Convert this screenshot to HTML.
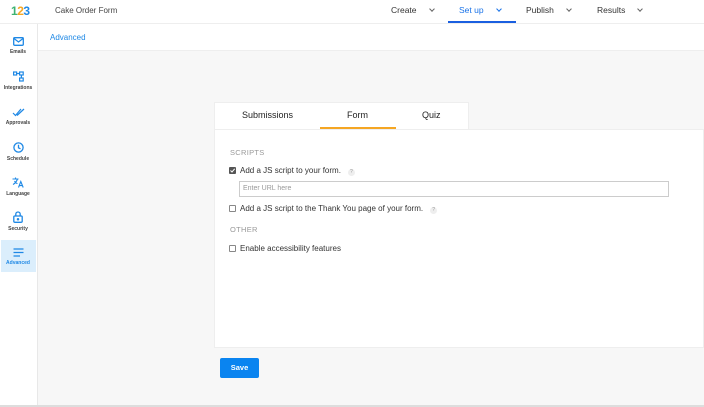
<!DOCTYPE html>
<html><head><style>
*{box-sizing:border-box;margin:0;padding:0}
body{width:704px;height:407px;overflow:hidden;background:#f7f7f7;font-family:"Liberation Sans",sans-serif;position:relative;color:#333}
.a{position:absolute}
.top{left:0;top:0;width:704px;height:24px;background:#fff;border-bottom:1px solid #eee}
.nav{top:5px;font-size:8.5px;color:#333}
.chev{display:inline-block;width:4px;height:4px;border-right:1px solid #666;border-bottom:1px solid #666;transform:rotate(45deg);margin-left:13px;position:relative;top:-2px}
.side{left:0;top:24px;width:38px;height:383px;background:#fff;border-right:1px solid #e8e8e8}
.si{position:absolute;left:0;width:36px;text-align:center;font-size:5px;font-weight:bold;color:#444}
.si svg{display:block;margin:0 auto 3px}
.lbl{font-size:8px;color:#333}
.cb{display:inline-block;width:7px;height:7px;border:1px solid #888;border-radius:1px;vertical-align:-1px;margin-right:4px;background:#fff}
.q{display:inline-block;width:7px;height:7px;border-radius:50%;background:#eee;font-size:5px;color:#999;text-align:center;line-height:7px;margin-left:7px}
</style></head><body>
<div class="a top"></div>
<div class="a" style="left:11px;top:4px;font-size:12px;font-weight:bold;letter-spacing:-0.5px"><span style="color:#3cb371">1</span><span style="color:#f5a623">2</span><span style="color:#1e88e5">3</span></div>
<div class="a" style="left:55px;top:6px;font-size:8px;color:#444">Cake Order Form</div>
<div class="a nav" style="left:391px">Create<span class="chev"></span></div>
<div class="a nav" style="left:459px;color:#1a73e8">Set up<span class="chev" style="border-color:#1a73e8"></span></div>
<div class="a" style="left:448px;top:21px;width:68px;height:2px;background:#1a5fe0"></div>
<div class="a nav" style="left:526px">Publish<span class="chev"></span></div>
<div class="a nav" style="left:597px">Results<span class="chev"></span></div>
<div class="a side"></div>
<div class="a" style="left:38px;top:24px;width:666px;height:27px;background:#fff;border-bottom:1px solid #eee"></div>
<div class="a" style="left:50px;top:33px;font-size:8px;color:#1e88e5">Advanced</div>

<div class="si" style="top:37px"><svg width="11" height="9" viewBox="0 0 11 9"><rect x="0.7" y="0.7" width="9.6" height="7.6" rx="1" fill="none" stroke="#1e88e5" stroke-width="1.3"/><path d="M1 1.5L5.5 5L10 1.5" fill="none" stroke="#1e88e5" stroke-width="1.2"/></svg>Emails</div>
<div class="si" style="top:71px"><svg width="11" height="11" viewBox="0 0 11 11" fill="none" stroke="#1e88e5" stroke-width="1.2"><rect x="0.6" y="1" width="3" height="3"/><rect x="6.6" y="1" width="3.6" height="3"/><rect x="6.6" y="7" width="3.6" height="3"/><path d="M3.6 2.5H6.6M8.4 4V7"/></svg>Integrations</div>
<div class="si" style="top:108px"><svg width="13" height="9" viewBox="0 0 13 9" fill="none" stroke="#1e88e5" stroke-width="1.2"><path d="M1 5L3.5 7.5L9 1M5 7.5L12 1"/></svg>Approvals</div>
<div class="si" style="top:142px"><svg width="11" height="11" viewBox="0 0 11 11" fill="none" stroke="#1e88e5" stroke-width="1.3"><circle cx="5.5" cy="5.5" r="4.6"/><path d="M5.5 2.8V5.8L7.5 6.8"/></svg>Schedule</div>
<div class="si" style="top:177px"><svg width="12" height="11" viewBox="0 0 12 11" fill="none" stroke="#1e88e5" stroke-width="1.1"><path d="M0.5 2H6.5M3.5 0.5V2M5.5 2Q4 6 1 7.5M2.5 4Q4 6.5 5.5 6.5M6.5 10.5L8.8 4.5L11.2 10.5M7.4 8.6H10.3"/></svg>Language</div>
<div class="si" style="top:211px"><svg width="10" height="12" viewBox="0 0 10 12" fill="none" stroke="#1e88e5" stroke-width="1.3"><rect x="0.8" y="5" width="8.4" height="6.3" rx="1"/><path d="M2.8 5V3.2a2.2 2.2 0 0 1 4.4 0V5"/><circle cx="5" cy="8.2" r="0.6" fill="#1e88e5"/></svg>Security</div>
<div class="a" style="left:1px;top:240px;width:35px;height:32px;background:#dbeefc"></div>
<div class="si" style="top:248px;color:#1e88e5"><svg width="11" height="9" viewBox="0 0 11 9" stroke="#1e88e5" stroke-width="1.2"><path d="M0.5 1H10.5M0.5 4.5H10.5M0.5 8H7"/></svg>Advanced</div>

<div class="a" style="left:214px;top:102px;width:255px;height:28px;background:#fff;border:1px solid #eee;border-bottom:none"></div>
<div class="a" style="left:242px;top:110px;font-size:9px;color:#222">Submissions</div>
<div class="a" style="left:347px;top:110px;font-size:9px;color:#222">Form</div>
<div class="a" style="left:422px;top:110px;font-size:9px;color:#222">Quiz</div>
<div class="a" style="left:320px;top:127px;width:76px;height:2px;background:#f5a623"></div>
<div class="a" style="left:214px;top:129px;width:490px;height:219px;background:#fff;border:1px solid #eee"></div>
<div class="a" style="left:230px;top:148px;font-size:7.5px;color:#999;letter-spacing:.3px">SCRIPTS</div>
<div class="a lbl" style="left:229px;top:166px"><span class="cb" style="background:#555;border-color:#555;position:relative"><svg width="7" height="7" viewBox="0 0 7 7" style="position:absolute;left:-1px;top:-1px"><path d="M1.5 3.5L3 5L5.7 1.8" fill="none" stroke="#fff" stroke-width="1"/></svg></span>Add a JS script to your form.<span class="q">?</span></div>
<div class="a" style="left:239px;top:181px;width:430px;height:16px;background:#fff;border:1px solid #ccc;font-size:7px;color:#999;padding:3px 3px">Enter URL here</div>
<div class="a lbl" style="left:229px;top:204px"><span class="cb"></span>Add a JS script to the Thank You page of your form.<span class="q">?</span></div>
<div class="a" style="left:230px;top:225px;font-size:7.5px;color:#999;letter-spacing:.3px">OTHER</div>
<div class="a lbl" style="left:229px;top:244px"><span class="cb"></span>Enable accessibility features</div>

<div class="a" style="left:220px;top:358px;width:39px;height:20px;background:#0a84f0;border-radius:2px;color:#fff;font-size:7.5px;font-weight:bold;text-align:center;line-height:20px">Save</div>
<div class="a" style="left:0;top:405px;width:704px;height:2px;background:#ddd"></div>
</body></html>
